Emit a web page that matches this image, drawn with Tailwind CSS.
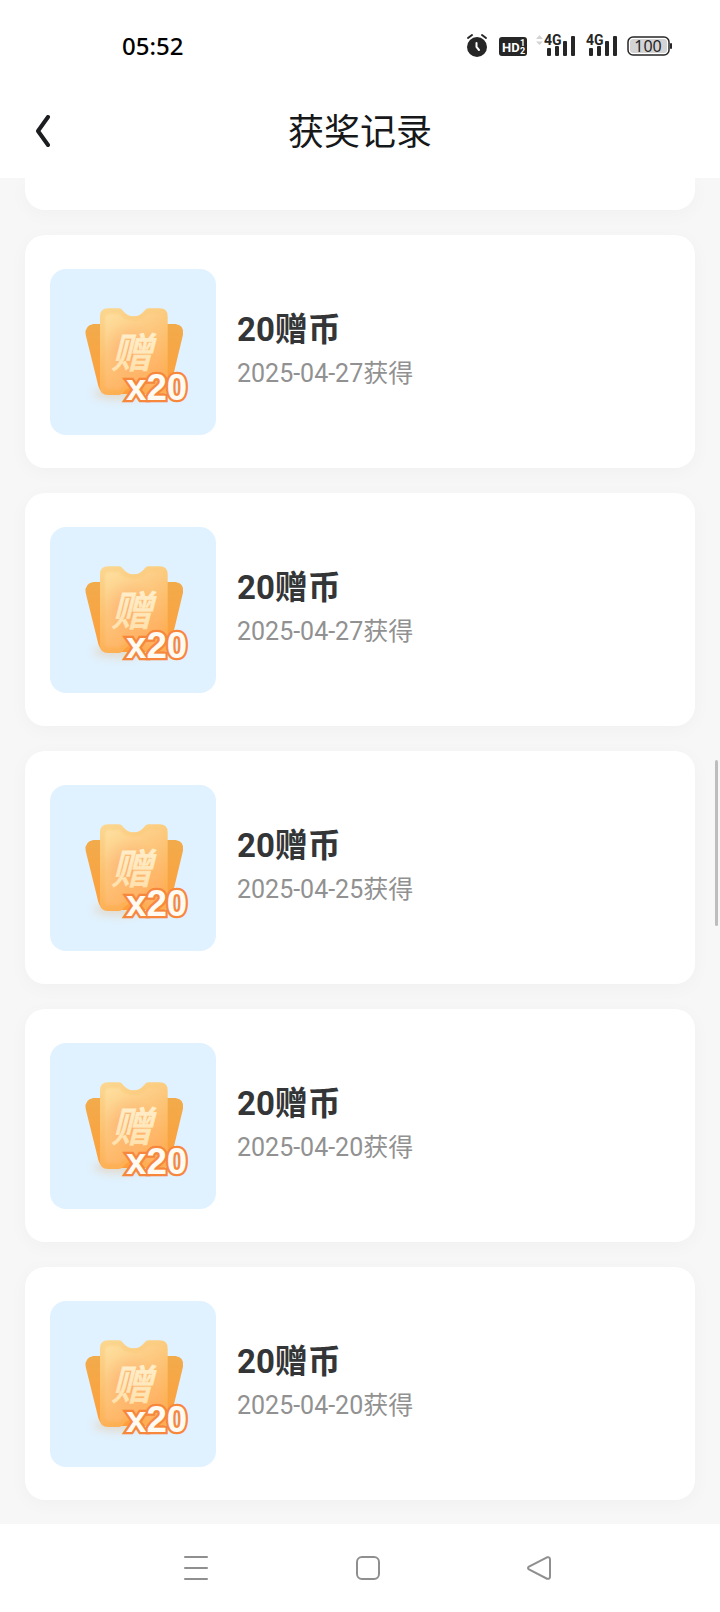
<!DOCTYPE html>
<html lang="zh-CN">
<head>
    <meta charset="UTF-8">
    <meta name="viewport" content="width=device-width, initial-scale=1.0">
    <title>获奖记录</title>
    <script src="https://cdn.jsdelivr.net/npm/@tailwindcss/browser@4"></script>
</head>
<body class="relative flex min-h-screen flex-col bg-[#f7f7f7] font-['Roboto','Noto_Sans_CJK_SC',sans-serif]">
    <!-- Shared coupon artwork -->
    <svg class="absolute h-0 w-0" aria-hidden="true">
        <defs>
            <linearGradient id="wing" x1="0" y1="0" x2="0" y2="1">
                <stop offset="0" stop-color="#f2ab4b"/>
                <stop offset="1" stop-color="#ff9f3c"/>
            </linearGradient>
            <linearGradient id="front" x1="0" y1="0" x2="0.5" y2="1">
                <stop offset="0" stop-color="#fee0a0"/>
                <stop offset="0.5" stop-color="#fdc67c"/>
                <stop offset="1" stop-color="#ffb060"/>
            </linearGradient>
            <linearGradient id="edge" x1="0" y1="0" x2="0.3" y2="1">
                <stop offset="0" stop-color="#fbd892"/>
                <stop offset="1" stop-color="#fdae52"/>
            </linearGradient>
            <radialGradient id="glow">
                <stop offset="0" stop-color="#ff9d68" stop-opacity="0.6"/>
                <stop offset="1" stop-color="#ffb070" stop-opacity="0"/>
            </radialGradient>
            <linearGradient id="ink" x1="0" y1="0" x2="0" y2="1">
                <stop offset="0" stop-color="#fff2d4"/>
                <stop offset="1" stop-color="#ffdfa8"/>
            </linearGradient>
            <filter id="soft" x="-30%" y="-100%" width="160%" height="300%">
                <feGaussianBlur stdDeviation="12"/>
            </filter>
            <filter id="inner" x="-10%" y="-10%" width="120%" height="120%">
                <feGaussianBlur stdDeviation="3"/>
            </filter>
        </defs>
        <symbol id="coupon" viewBox="30 39 498 498">
            <ellipse cx="235" cy="412" rx="75" ry="20" fill="#e9a868" opacity="0.3" filter="url(#soft)"/>
            <path d="M160 204H407Q434 208 429 236L393 386Q386 412 365 414H202Q181 412 175 390L137 236Q133 209 160 204Z" fill="url(#wing)"/>
            <path d="M204 157H236Q244 157 249 164Q262 181 281 181Q300 181 313 164Q318 157 326 157H359Q383 157 383 181V393Q383 417 359 417H326Q318 417 313 410Q300 394 281 394Q262 394 249 410Q244 417 236 417H204Q180 417 180 393V181Q180 157 204 157Z" fill="url(#edge)"/>
            <path d="M207 174H238Q254 195 281 195Q308 195 324 174H356Q368 174 368 190V384Q368 400 356 400H324Q308 380 281 380Q254 380 238 400H207Q195 400 195 384V190Q195 174 207 174Z" fill="url(#front)" filter="url(#inner)"/>
            <ellipse cx="270" cy="285" rx="85" ry="90" fill="url(#glow)"/>
            <text x="213" y="336" font-size="124" font-style="italic" font-weight="500" font-family="Noto Sans CJK SC, sans-serif" fill="url(#ink)" stroke="url(#ink)" stroke-width="2">赠</text>
            <text x="258" y="433" font-size="110" font-weight="700" font-family="Liberation Sans, sans-serif" fill="#fffaf2" stroke="#f6873c" stroke-width="14" stroke-linejoin="miter" paint-order="stroke">x20</text>
        </symbol>
    </svg>

    <header class="bg-white">
        <div class="flex h-21 items-center justify-between pl-[122px] pr-[46px] text-[#262626]">
            <time class="mt-2 font-['Noto_Sans',sans-serif] text-[24px] leading-8 font-medium text-black">05:52</time>
            <svg class="mt-2 h-[30px] w-[208px]" viewBox="0 0 208 30" fill="currentColor" aria-label="100">
                <!-- alarm -->
                <circle cx="11" cy="16" r="10"/>
                <path d="M2 7L6 4M16 4L20 7" stroke="currentColor" stroke-width="2" stroke-linecap="round"/>
                <path d="M10.500 12V16L13 19" fill="none" stroke="#fff" stroke-width="2" stroke-linecap="round"/>
                <!-- HD -->
                <rect x="33" y="6" width="28" height="19" rx="3"/>
                <g fill="#fff" font-family="Roboto, sans-serif" font-weight="700">
                    <text x="36" y="21" font-size="13">HD</text>
                    <text x="54" y="15" font-size="9">1</text>
                    <text x="54" y="23" font-size="9">2</text>
                </g>
                <!-- signal -->
                <path d="M70 8L73.500 4L77 8ZM70 10.500L73.500 14L77 10.500Z" fill="#d4d4d4"/>
                <g id="bars">
                    <rect x="81" y="17" width="4" height="8" rx="1"/>
                    <rect x="89" y="15" width="4" height="10" rx="1"/>
                    <rect x="97" y="10" width="4" height="15" rx="1"/>
                    <rect x="105" y="5" width="4" height="20" rx="1"/>
                    <text x="78" y="14" font-size="14" font-weight="700" font-family="Roboto, sans-serif" stroke="#fff" stroke-width="2" paint-order="stroke">4G</text>
                </g>
                <use href="#bars" x="42"/>
                <!-- battery -->
                <rect x="162" y="6" width="41" height="18" rx="5" fill="#fff" stroke="currentColor" stroke-width="1.500"/>
                <rect x="164" y="8" width="37" height="14" rx="3" fill="#d4d4d4"/>
                <rect x="204" y="12" width="2" height="6" rx="1"/>
                <text x="182" y="21" font-size="16" text-anchor="middle" font-family="Noto Sans, sans-serif">100</text>
            </svg>
        </div>
        <div class="grid h-[94px] grid-cols-[80px_1fr_80px] items-center">
            <button type="button" aria-label="返回" class="flex h-16 items-center pl-9">
                <svg class="h-8 w-4" viewBox="0 0 16 32" fill="none" stroke="#1c1d20" stroke-width="4" stroke-linecap="round" stroke-linejoin="round">
                    <path d="M12 2L2 16L12 30"/>
                </svg>
            </button>
            <h1 class="pb-1 text-center font-['Noto_Sans_CJK_SC',sans-serif] text-[36px] leading-12 font-normal text-[#16181a]">获奖记录</h1>
        </div>
    </header>

    <main class="flex-1 overflow-hidden px-[25px] pb-6">
        <div class="h-8 rounded-b-[20px] bg-white shadow-[0_4px_20px_rgba(0,0,0,0.03)]"></div>
        <ul class="mt-[25px] space-y-[25px]">
            <li class="flex h-[233px] items-center gap-[21px] rounded-[20px] bg-white px-[25px] shadow-[0_4px_20px_rgba(0,0,0,0.03)]">
                <svg class="size-[166px] rounded-2xl bg-[#e0f2ff]" aria-label="赠币"><use href="#coupon"/></svg>
                <div>
                    <h2 class="text-[33px] leading-11 font-bold text-[#333537]">20赠币</h2>
                    <p class="text-[25px] leading-11 text-[#919191]">2025-04-27获得</p>
                </div>
            </li>
            <li class="flex h-[233px] items-center gap-[21px] rounded-[20px] bg-white px-[25px] shadow-[0_4px_20px_rgba(0,0,0,0.03)]">
                <svg class="size-[166px] rounded-2xl bg-[#e0f2ff]" aria-label="赠币"><use href="#coupon"/></svg>
                <div>
                    <h2 class="text-[33px] leading-11 font-bold text-[#333537]">20赠币</h2>
                    <p class="text-[25px] leading-11 text-[#919191]">2025-04-27获得</p>
                </div>
            </li>
            <li class="flex h-[233px] items-center gap-[21px] rounded-[20px] bg-white px-[25px] shadow-[0_4px_20px_rgba(0,0,0,0.03)]">
                <svg class="size-[166px] rounded-2xl bg-[#e0f2ff]" aria-label="赠币"><use href="#coupon"/></svg>
                <div>
                    <h2 class="text-[33px] leading-11 font-bold text-[#333537]">20赠币</h2>
                    <p class="text-[25px] leading-11 text-[#919191]">2025-04-25获得</p>
                </div>
            </li>
            <li class="flex h-[233px] items-center gap-[21px] rounded-[20px] bg-white px-[25px] shadow-[0_4px_20px_rgba(0,0,0,0.03)]">
                <svg class="size-[166px] rounded-2xl bg-[#e0f2ff]" aria-label="赠币"><use href="#coupon"/></svg>
                <div>
                    <h2 class="text-[33px] leading-11 font-bold text-[#333537]">20赠币</h2>
                    <p class="text-[25px] leading-11 text-[#919191]">2025-04-20获得</p>
                </div>
            </li>
            <li class="flex h-[233px] items-center gap-[21px] rounded-[20px] bg-white px-[25px] shadow-[0_4px_20px_rgba(0,0,0,0.03)]">
                <svg class="size-[166px] rounded-2xl bg-[#e0f2ff]" aria-label="赠币"><use href="#coupon"/></svg>
                <div>
                    <h2 class="text-[33px] leading-11 font-bold text-[#333537]">20赠币</h2>
                    <p class="text-[25px] leading-11 text-[#919191]">2025-04-20获得</p>
                </div>
            </li>
        </ul>
    </main>

    <!-- Scroll position -->
    <div class="absolute top-[760px] right-[2px] h-[166px] w-[3px] rounded-full bg-[#bdbdbd]"></div>

    <nav class="flex h-[88px] items-center justify-between bg-white pr-[167px] pl-[182px] text-[#8f8f8f]">
        <button type="button" aria-label="菜单">
            <svg class="size-7" viewBox="0 0 28 28" fill="none" stroke="currentColor" stroke-width="2" stroke-linecap="round"><path d="M3 3H25M3 14H25M3 25H25"/></svg>
        </button>
        <button type="button" aria-label="主页">
            <svg class="size-7" viewBox="0 0 28 28" fill="none" stroke="currentColor" stroke-width="2"><rect x="3" y="3" width="22" height="22" rx="5"/></svg>
        </button>
        <button type="button" aria-label="后退">
            <svg class="size-7" viewBox="0 0 28 28" fill="none" stroke="currentColor" stroke-width="2"><path d="M22 3.300L4 12.500Q2 14 4 15.500L22 24.700Q25 25.500 25 22.500V5.500Q25 2.500 22 3.300Z"/></svg>
        </button>
    </nav>
</body>
</html>
